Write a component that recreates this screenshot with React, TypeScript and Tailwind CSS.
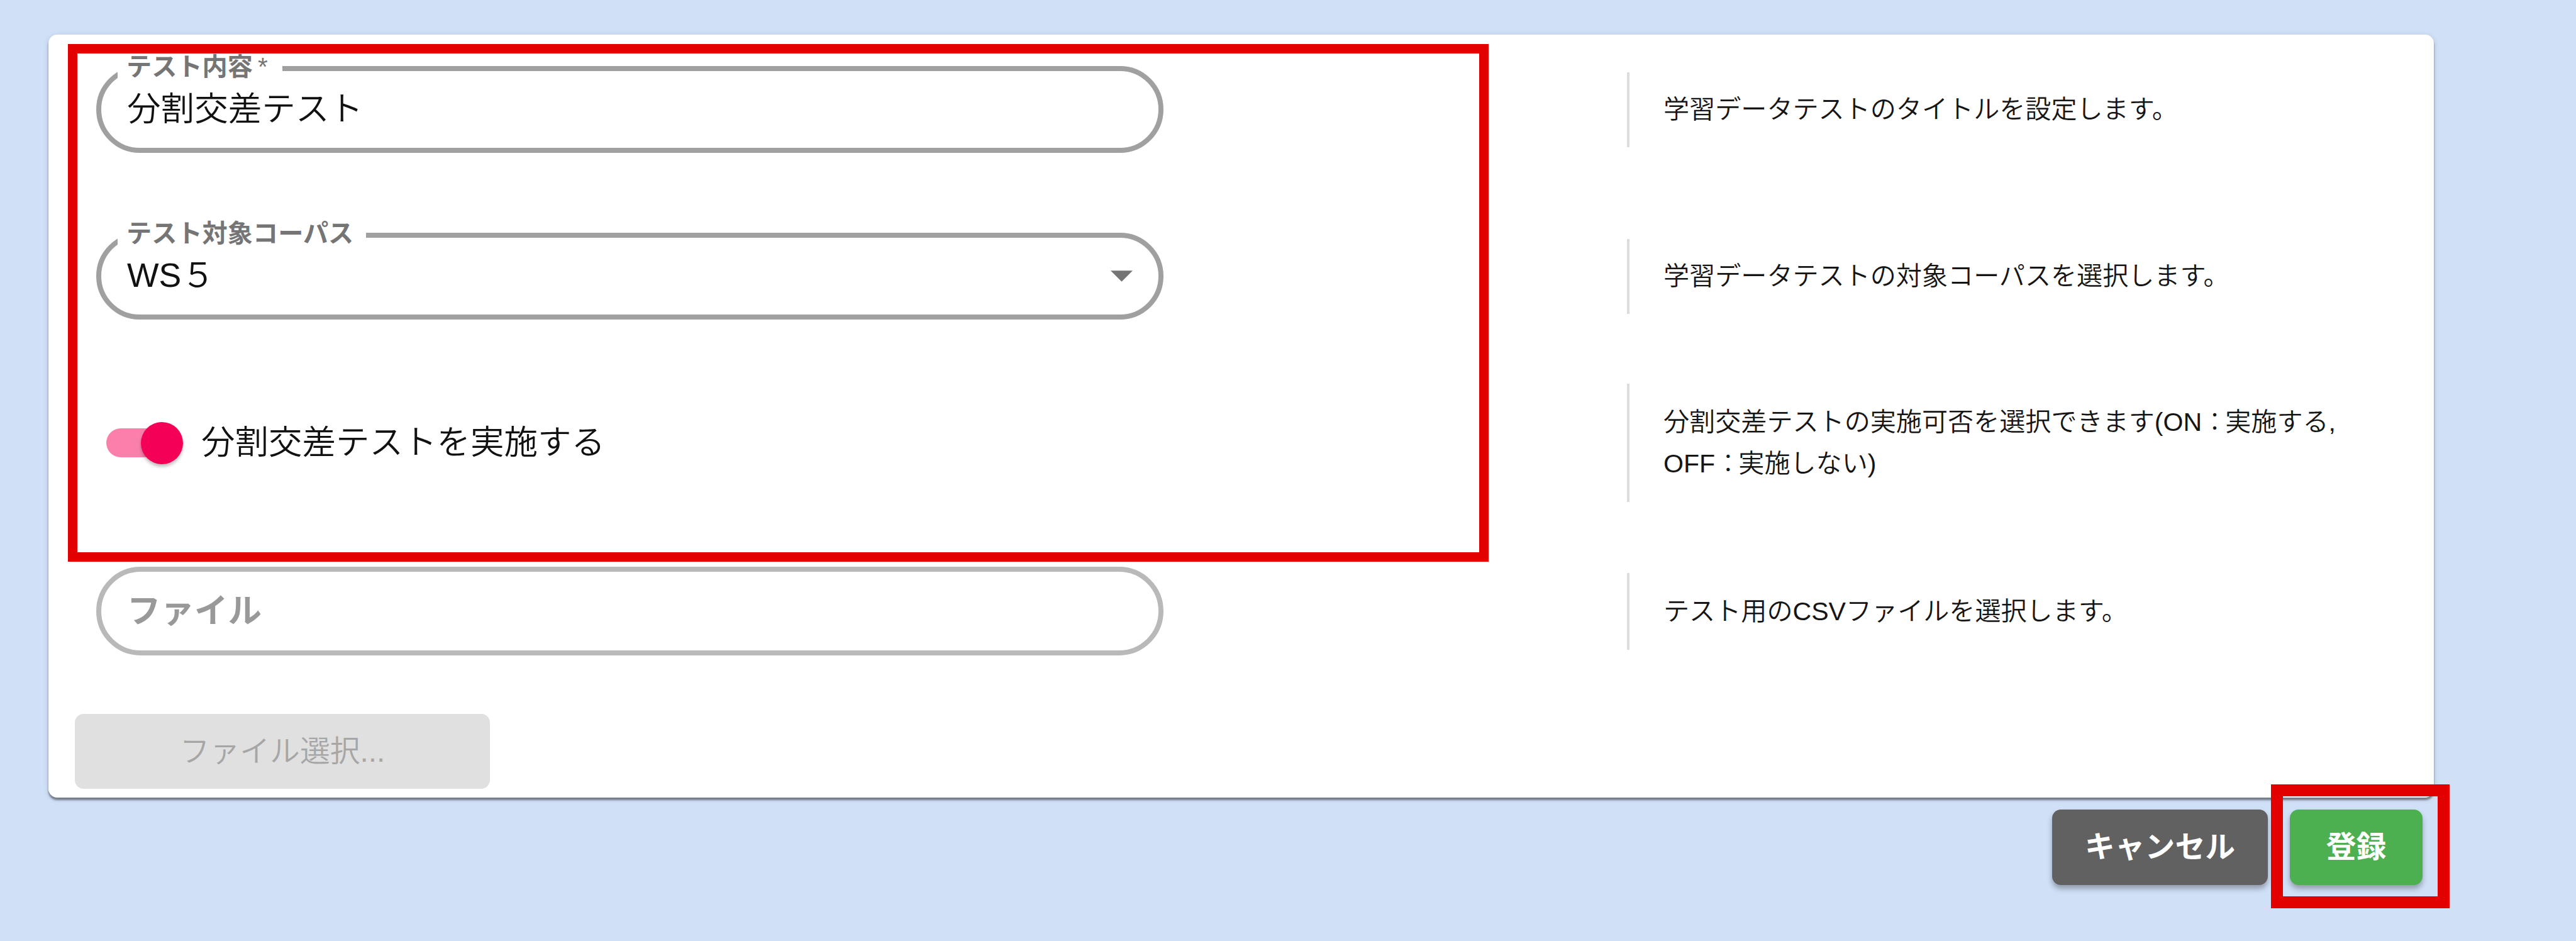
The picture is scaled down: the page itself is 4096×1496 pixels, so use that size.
import { ReactNode } from "react";

interface FieldProps {
  label: string;
  required?: boolean;
  notch: string;
  children: ReactNode;
}

interface RowProps {
  className: string;
  help: ReactNode;
  helpClass: string;
  children: ReactNode;
}

const Field = ({ label, required, notch, children }: FieldProps) => {
  return (
    <div className="relative flex items-center w-[1697px] h-[138px] rounded-full border-8 border-[#a0a0a0] pl-[41px] pr-[41px] text-[53.6px] leading-[60px] text-[#111111]">
      <label
        className={`absolute left-[26px] -top-[31px] h-[50px] pl-[14px] bg-white whitespace-nowrap text-[40.2px] leading-[50px] font-bold text-[#757575] ${notch}`}
      >
        {label}
        {required && <span className="ml-[8px] font-normal">*</span>}
      </label>
      {children}
    </div>
  );
};

const Row = ({ className, help, helpClass, children }: RowProps) => {
  return (
    <div className={`flex items-center ${className}`}>
      <div className="w-[2434px] shrink-0">{children}</div>
      <div
        className={`flex items-center border-l-4 border-[#dcdcdc] pl-[54px] text-[41.1px] leading-[66px] whitespace-nowrap text-[#151515] ${helpClass}`}
      >
        <p>{help}</p>
      </div>
    </div>
  );
};

const Colon = () => <span className="font-light tracking-[-4px]">：</span>;

const App = () => {
  return (
    <div className="relative w-[4096px] h-[1496px] overflow-hidden bg-[#d0e0f7] pt-[55px] pl-[77px] font-[350] font-['Liberation_Sans','Noto_Sans_CJK_JP',sans-serif]">
      <main className="w-[3793px] h-[1213px] pt-[50px] pl-[76px] bg-white rounded-[14px] shadow-[0_4px_3px_rgba(0,0,0,0.4),0_2px_10px_rgba(0,0,0,0.14)]">
        <Row
          className="h-[138px]"
          help="学習データテストのタイトルを設定します。"
          helpClass="h-[119px]"
        >
          <Field label="テスト内容" required notch="w-[262px]">
            <span className="relative -top-px">分割交差テスト</span>
          </Field>
        </Row>

        <Row
          className="h-[138px] mt-[127px]"
          help="学習データテストの対象コーパスを選択します。"
          helpClass="h-[119px]"
        >
          <Field label="テスト対象コーパス" notch="w-[395px]">
            <span className="relative -top-[2px] grow">WS５</span>
            <svg className="w-[35px] h-[18px]" viewBox="0 0 36 18">
              <path d="M0 0h36L18 18z" fill="#757575" />
            </svg>
          </Field>
        </Row>

        <Row
          className="h-[188px] mt-[102px]"
          help={
            <>
              分割交差テストの実施可否を選択できます(ON
              <Colon />
              実施する,
              <br />
              OFF
              <Colon />
              実施しない)
            </>
          }
          helpClass="h-[188px]"
        >
          <div className="flex items-center pl-[16px]">
            <div className="flex items-center w-[114px] h-[46px] rounded-full bg-[#fa80ab]">
              <div className="ml-[55px] size-[67px] shrink-0 rounded-full bg-[#f50057] shadow-[0_4px_5px_rgba(0,0,0,0.25)]" />
            </div>
            <span className="ml-[37px] text-[53.5px] leading-[60px] text-[#111111]">
              分割交差テストを実施する
            </span>
          </div>
        </Row>

        <Row
          className="h-[141px] mt-[103px]"
          help="テスト用のCSVファイルを選択します。"
          helpClass="h-[122px]"
        >
          <div className="flex items-center w-[1697px] h-[141px] rounded-full border-8 border-[#b9b9b9] pl-[41px] text-[53.5px] leading-[60px] font-bold text-[#999999]">
            ファイル
          </div>
        </Row>

        <button className="block mt-[93px] -ml-[34px] w-[660px] h-[119px] rounded-[14px] bg-[#e0e0e0] text-[47.8px] text-[#a6a6a6]">
          ファイル選択...
        </button>
      </main>

      <div className="flex gap-[35px] mt-[19px] ml-[3186px] text-[47.8px] font-bold text-white">
        <button className="w-[343px] h-[120px] rounded-[14px] bg-[#616161] shadow-[0_6px_8px_rgba(0,0,0,0.3)]">
          キャンセル
        </button>
        <button className="w-[211px] h-[120px] rounded-[14px] bg-[#4caf50] shadow-[0_6px_8px_rgba(0,0,0,0.3)]">
          登録
        </button>
      </div>

      {/* highlight frames */}
      <div className="absolute left-[108px] top-[70px] w-[2259px] h-[823px] border-[15px] border-[#e30000]" />
      <div className="absolute left-[3611px] top-[1247px] w-[284px] h-[197px] border-[19px] border-[#e30000]" />
    </div>
  );
};

export default App;
